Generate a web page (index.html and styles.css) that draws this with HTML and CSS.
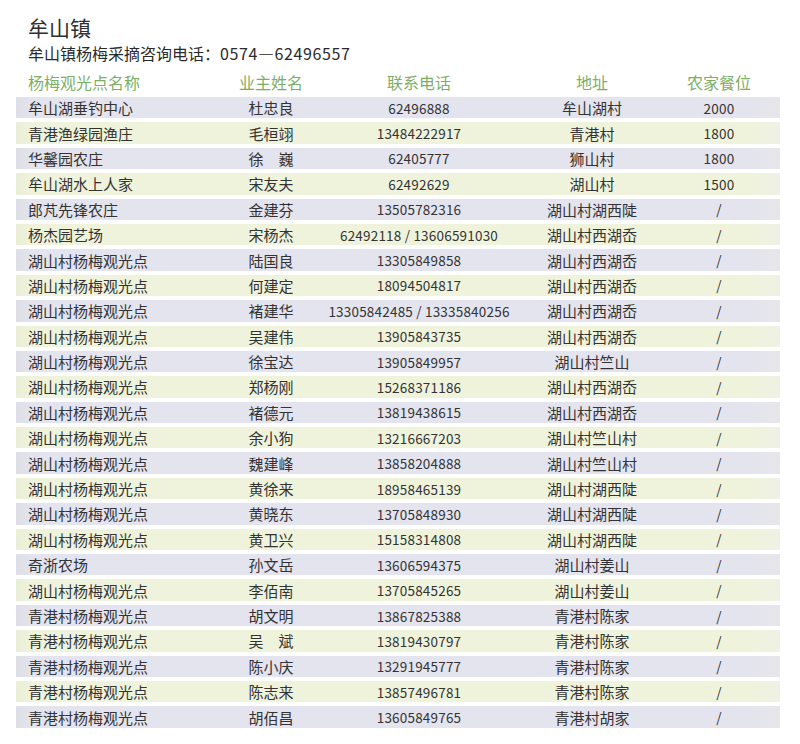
FILE: index.html
```html
<!DOCTYPE html>
<html lang="zh-CN">
<head>
<meta charset="utf-8">
<title>牟山镇</title>
<link rel="stylesheet" href="styles.css">
</head>
<body>
<div class="page">
  <h1 class="title">牟山镇</h1>
  <p class="subtitle">牟山镇杨梅采摘咨询电话：<span class="num">0574—62496557</span></p>
  <div class="table">
    <div class="row head">
      <span class="c1">杨梅观光点名称</span><span class="c2">业主姓名</span><span class="c3">联系电话</span><span class="c4">地址</span><span class="c5">农家餐位</span>
    </div>
    <div class="body">
      <div class="row a"><span class="c1">牟山湖垂钓中心</span><span class="c2">杜忠良</span><span class="c3 num">62496888</span><span class="c4">牟山湖村</span><span class="c5 num">2000</span></div>
      <div class="row b"><span class="c1">青港渔绿园渔庄</span><span class="c2">毛桓翊</span><span class="c3 num">13484222917</span><span class="c4">青港村</span><span class="c5 num">1800</span></div>
      <div class="row a"><span class="c1">华馨园农庄</span><span class="c2">徐　巍</span><span class="c3 num">62405777</span><span class="c4">狮山村</span><span class="c5 num">1800</span></div>
      <div class="row b"><span class="c1">牟山湖水上人家</span><span class="c2">宋友夫</span><span class="c3 num">62492629</span><span class="c4">湖山村</span><span class="c5 num">1500</span></div>
      <div class="row a"><span class="c1">郎芃先锋农庄</span><span class="c2">金建芬</span><span class="c3 num">13505782316</span><span class="c4">湖山村湖西陡</span><span class="c5 num">/</span></div>
      <div class="row b"><span class="c1">杨杰园艺场</span><span class="c2">宋杨杰</span><span class="c3 num">62492118 / 13606591030</span><span class="c4">湖山村西湖岙</span><span class="c5 num">/</span></div>
      <div class="row a"><span class="c1">湖山村杨梅观光点</span><span class="c2">陆国良</span><span class="c3 num">13305849858</span><span class="c4">湖山村西湖岙</span><span class="c5 num">/</span></div>
      <div class="row b"><span class="c1">湖山村杨梅观光点</span><span class="c2">何建定</span><span class="c3 num">18094504817</span><span class="c4">湖山村西湖岙</span><span class="c5 num">/</span></div>
      <div class="row a"><span class="c1">湖山村杨梅观光点</span><span class="c2">褚建华</span><span class="c3 num">13305842485 / 13335840256</span><span class="c4">湖山村西湖岙</span><span class="c5 num">/</span></div>
      <div class="row b"><span class="c1">湖山村杨梅观光点</span><span class="c2">吴建伟</span><span class="c3 num">13905843735</span><span class="c4">湖山村西湖岙</span><span class="c5 num">/</span></div>
      <div class="row a"><span class="c1">湖山村杨梅观光点</span><span class="c2">徐宝达</span><span class="c3 num">13905849957</span><span class="c4">湖山村竺山</span><span class="c5 num">/</span></div>
      <div class="row b"><span class="c1">湖山村杨梅观光点</span><span class="c2">郑杨刚</span><span class="c3 num">15268371186</span><span class="c4">湖山村西湖岙</span><span class="c5 num">/</span></div>
      <div class="row a"><span class="c1">湖山村杨梅观光点</span><span class="c2">褚德元</span><span class="c3 num">13819438615</span><span class="c4">湖山村西湖岙</span><span class="c5 num">/</span></div>
      <div class="row b"><span class="c1">湖山村杨梅观光点</span><span class="c2">余小狗</span><span class="c3 num">13216667203</span><span class="c4">湖山村竺山村</span><span class="c5 num">/</span></div>
      <div class="row a"><span class="c1">湖山村杨梅观光点</span><span class="c2">魏建峰</span><span class="c3 num">13858204888</span><span class="c4">湖山村竺山村</span><span class="c5 num">/</span></div>
      <div class="row b"><span class="c1">湖山村杨梅观光点</span><span class="c2">黄徐来</span><span class="c3 num">18958465139</span><span class="c4">湖山村湖西陡</span><span class="c5 num">/</span></div>
      <div class="row a"><span class="c1">湖山村杨梅观光点</span><span class="c2">黄晓东</span><span class="c3 num">13705848930</span><span class="c4">湖山村湖西陡</span><span class="c5 num">/</span></div>
      <div class="row b"><span class="c1">湖山村杨梅观光点</span><span class="c2">黄卫兴</span><span class="c3 num">15158314808</span><span class="c4">湖山村湖西陡</span><span class="c5 num">/</span></div>
      <div class="row a"><span class="c1">奇浙农场</span><span class="c2">孙文岳</span><span class="c3 num">13606594375</span><span class="c4">湖山村姜山</span><span class="c5 num">/</span></div>
      <div class="row b"><span class="c1">湖山村杨梅观光点</span><span class="c2">李佰南</span><span class="c3 num">13705845265</span><span class="c4">湖山村姜山</span><span class="c5 num">/</span></div>
      <div class="row a"><span class="c1">青港村杨梅观光点</span><span class="c2">胡文明</span><span class="c3 num">13867825388</span><span class="c4">青港村陈家</span><span class="c5 num">/</span></div>
      <div class="row b"><span class="c1">青港村杨梅观光点</span><span class="c2">吴　斌</span><span class="c3 num">13819430797</span><span class="c4">青港村陈家</span><span class="c5 num">/</span></div>
      <div class="row a"><span class="c1">青港村杨梅观光点</span><span class="c2">陈小庆</span><span class="c3 num">13291945777</span><span class="c4">青港村陈家</span><span class="c5 num">/</span></div>
      <div class="row b"><span class="c1">青港村杨梅观光点</span><span class="c2">陈志来</span><span class="c3 num">13857496781</span><span class="c4">青港村陈家</span><span class="c5 num">/</span></div>
      <div class="row a"><span class="c1">青港村杨梅观光点</span><span class="c2">胡佰昌</span><span class="c3 num">13605849765</span><span class="c4">青港村胡家</span><span class="c5 num">/</span></div>
    </div>
  </div>
</div>
</body>
</html>
```

FILE: styles.css
```css
html, body {
  margin: 0;
  padding: 0;
  background: #ffffff;
}

.page {
  width: 800px;
  height: 744px;
  box-sizing: border-box;
  padding: 14px 20px 0 16px;
  font-family: "Noto Sans CJK SC", "Noto Sans", sans-serif;
  color: #2e2e2e;
}

.title {
  margin: 0 0 0 12px;
  font-size: 21px;
  line-height: 26px;
  font-weight: 400;
  color: #2f2f2f;
}

.subtitle {
  margin: 0 0 0 12px;
  font-size: 16px;
  line-height: 26px;
  font-weight: 400;
  color: #2a2a2a;
}

.subtitle .num {
  letter-spacing: 0.6px;
}

.table {
  margin-top: 4px;
  width: 764px;
}

.row {
  display: grid;
  grid-template-columns: 204px 102px 194px 152px 102px 10px;
  align-items: center;
}

.row span {
  white-space: nowrap;
  text-align: center;
}

.row .c1 {
  text-align: left;
  padding-left: 12px;
}

.head {
  height: 23px;
  font-size: 16px;
  color: #7dae66;
}

.body {
  margin-top: 4px;
  display: flex;
  flex-direction: column;
  gap: 4px;
}

.body .row {
  height: 21.4px;
  font-size: 15px;
  color: #333333;
}

.row.a {
  background: linear-gradient(to right, #dedee6 0%, #e4e4ee 2%, #e4e4ee 96%, #e6e6ea 100%);
}

.row.b {
  background: linear-gradient(to right, #eaeed6 0%, #eff3dc 2%, #eff3dc 96%, #eff1e4 100%);
}

.body .num {
  font-size: 13.5px;
  letter-spacing: 0.2px;
}
```
